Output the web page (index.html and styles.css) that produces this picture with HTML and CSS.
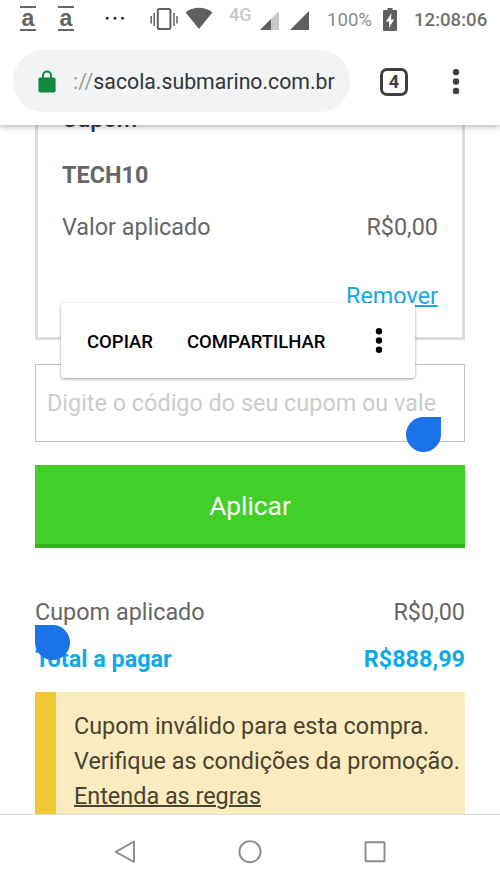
FILE: index.html
```html
<!DOCTYPE html>
<html lang="pt-BR">
<head>
<meta charset="utf-8">
<title>Sacola</title>
<link rel="stylesheet" href="styles.css">
</head>
<body>
<header class="status">
  <span class="amz">a</span>
  <span class="amz second">a</span>
  <svg class="dots" width="20" height="4" viewBox="0 0 20 4"><path fill="#222" d="M1 1h2.500v2.500H1zM8.700 1h2.500v2.500H8.700zM16.300 1h2.500v2.500h-2.500z"/></svg>
  <svg class="vibrate" width="28" height="24" viewBox="0 0 28 24"><rect x="7.800" y="2" width="12.600" height="20" rx="1.500" fill="none" stroke="#5f5f5f" stroke-width="2"/><path d="M4.200 6v13M1.200 9v7.500M24 6v13M27 9v7.500" stroke="#5f5f5f" stroke-width="1.500"/></svg>
  <svg class="wifi" width="28" height="22" viewBox="0 0 28 22"><path fill="#5f5f5f" d="M14 22 .7 5.500C4.500 2.300 9 .8 14 .8s9.500 1.500 13.300 4.700z"/></svg>
  <span class="net">4G</span>
  <svg class="sig1" width="19" height="19" viewBox="0 0 19 19"><path fill="#c8c8c8" d="M0 19 19 0v19z"/><path fill="#5f5f5f" d="M0 19 11 8v11z"/></svg>
  <svg class="sig2" width="19" height="19" viewBox="0 0 19 19"><path fill="#5f5f5f" d="M0 19 19 0v19z"/></svg>
  <span class="pct">100%</span>
  <svg class="battery" width="14" height="23" viewBox="0 0 14 23"><path fill="#5f5f5f" d="M4.500 0h5v2H13q1 0 1 1v19q0 1-1 1H1q-1 0-1-1V3q0-1 1-1h3.500z"/><path fill="#fff" d="M8.500 5 3 13.500h3V20l5-8.500H8z"/></svg>
  <span class="clock">12:08:06</span>
</header>
<div class="toolbar">
  <div class="address">
    <svg class="lock" width="18" height="23" viewBox="0 0 18 23"><path d="M5 9V5.500a4 4 0 0 1 8 0V9" fill="none" stroke="#118740" stroke-width="2"/><rect x=".4" y="7.500" width="17.200" height="15" rx="2" fill="#118740"/></svg>
    <span class="url"><span class="scheme">://</span>sacola.submarino.com.br</span>
  </div>
  <span class="tabs">4</span>
  <svg class="menu" width="8" height="26" viewBox="0 0 8 26"><g fill="#3c4043"><circle cx="4" cy="3.100" r="3.200"/><circle cx="4" cy="12.500" r="3.200"/><circle cx="4" cy="21.900" r="3.200"/></g></svg>
</div>
<main class="page">
  <section class="card">
    <h2 class="row title">Cupom</h2>
    <div class="row code">TECH10</div>
    <div class="row value"><span>Valor aplicado</span><span>R$0,00</span></div>
    <div class="row remove"><a class="link">Remover</a></div>
  </section>
  <div class="field">Digite o código do seu cupom ou vale</div>
  <div class="apply">Aplicar</div>
  <div class="row applied"><span>Cupom aplicado</span><span>R$0,00</span></div>
  <div class="row total"><span>Total a pagar</span><span>R$888,99</span></div>
  <div class="alert">
    <div>Cupom inválido para esta compra.</div>
    <div>Verifique as condições da promoção.</div>
    <div><a class="rules">Entenda as regras</a></div>
  </div>
  <div class="popup">
    <span class="copy">COPIAR</span><span class="share">COMPARTILHAR</span>
    <svg class="more" width="8" height="26" viewBox="0 0 8 26"><circle cx="4" cy="3.300" r="3.200"/><circle cx="4" cy="12.500" r="3.200"/><circle cx="4" cy="21.700" r="3.200"/></svg>
  </div>
  <i class="handle end"></i>
  <i class="handle start"></i>
</main>
<nav class="nav">
  <svg width="24" height="26" viewBox="0 0 24 26"><path d="M21 2.500v20.500L2.800 12.800z" fill="none" stroke="#8c8c8c" stroke-width="1.900" stroke-linejoin="round"/></svg>
  <svg width="24" height="26" viewBox="0 0 24 26"><circle cx="12" cy="12.700" r="10.600" fill="none" stroke="#8c8c8c" stroke-width="1.900"/></svg>
  <svg width="24" height="26" viewBox="0 0 24 26"><rect x="2.500" y="3.200" width="19" height="19" rx=".5" fill="none" stroke="#8c8c8c" stroke-width="1.900"/></svg>
</nav>
</body>
</html>
```
FILE: styles.css
```css
* { box-sizing: border-box; }
body { margin: 0; width: 500px; height: 889px; display: flex; flex-direction: column; overflow: hidden; background: #fff; font-family: Roboto, sans-serif; color: #666; }
svg { display: block; flex: none; }
span { white-space: nowrap; }
.status { height: 38px; flex: none; display: flex; align-items: flex-start; padding-left: 20px; background: #fff; position: relative; z-index: 3; }
.amz { width: 16px; height: 25px; margin-top: 6px; border: solid #666; border-width: 2px 0; font: bold 23px/20px "Liberation Sans", sans-serif; text-align: center; }
.second { margin-left: 22px; }
.dots { margin: 16px 0 0 31px; }
.vibrate { margin: 7px 0 0 25px; }
.wifi { margin: 7px 0 0 7px; }
.net { width: 24px; margin: 4px 0 0 16px; font-size: 18px; line-height: 21px; font-weight: 500; color: #c9c9c9; }
.sig1 { margin: 11px 0 0 7px; }
.sig2 { margin: 11px 0 0 11px; }
.pct { width: 45px; margin: 8px 0 0 18px; font-size: 18.600px; line-height: 24px; color: #8a8a8a; }
.battery { margin: 8px 0 0 11px; }
.clock { margin: 8px 0 0 17px; font-size: 18.600px; line-height: 24px; font-weight: 500; color: #707070; }
.toolbar { height: 87px; flex: none; display: flex; align-items: center; padding-left: 13px; background: #fff; box-shadow: 0 1px 7px rgba(0,0,0,.35); z-index: 2; position: relative; }
.address { width: 337px; height: 62px; margin-top: -1px; border-radius: 31px; background: #f1f3f4; display: flex; align-items: center; padding-left: 25px; }
.url { margin: 2px 0 0 17px; font-size: 21.250px; line-height: 28px; color: #333639; }
.scheme { color: #999c9e; }
.tabs { margin: 0 0 0 30px; width: 28px; height: 28px; border: 3px solid #3c4043; border-radius: 7px; font-size: 18px; line-height: 22px; font-weight: 700; color: #3c4043; text-align: center; }
.menu { margin-left: 44px; }
.page { height: 689px; flex: none; overflow: hidden; position: relative; padding: 0 35px; font-size: 23.400px; }
.row { display: flex; justify-content: space-between; height: 28px; line-height: 28px; }
.card { height: 245px; margin-top: -30px; border: 3px solid #ddd; padding: 7px 24px 0; }
.title { margin: 0; font-size: 23.400px; font-weight: 500; color: #333; }
.code { margin-top: 28px; font-weight: 700; }
.value { margin-top: 24px; }
.remove { margin-top: 41px; justify-content: flex-end; }
.link { color: #17a9e1; text-decoration: underline; text-decoration-thickness: 2px; }
.field { height: 78px; margin-top: 24px; border: 1px solid #c4c4c4; padding-left: 11px; line-height: 77px; color: #ccc; white-space: nowrap; }
.apply { height: 83px; margin-top: 23px; border-bottom: 4px solid #32b31d; background: #42cf2a; color: #fff; text-align: center; font-size: 26.300px; line-height: 83px; }
.applied { margin-top: 50px; }
.total { margin-top: 19px; font-weight: 700; color: #0eaae6; }
.alert { height: 130px; margin-top: 19px; border-left: 21px solid #f0c735; background: #faecc0; padding: 17px 0 0 18px; color: #49432f; line-height: 35px; white-space: nowrap; }
.rules { text-decoration: underline; text-decoration-thickness: 2px; }
.popup { position: absolute; left: 61px; top: 178px; width: 354px; height: 75px; border-radius: 3px; background: #fff; box-shadow: 0 1px 3px rgba(0,0,0,.4); display: flex; align-items: center; padding-left: 26px; font-size: 18.500px; font-weight: 500; color: #000; }
.copy, .share { margin-top: 2px; }
.share { margin-left: 34px; }
.more { margin-left: auto; margin-right: 32px; }
.handle { position: absolute; width: 35px; height: 35px; background: #1a73e8; border-radius: 50%; }
.end { left: 406px; top: 292px; border-top-right-radius: 0; }
.start { left: 35px; top: 500px; border-top-left-radius: 0; }
.nav { height: 75px; flex: none; border-top: 1px solid #ddd; background: #fff; display: flex; justify-content: center; align-items: center; gap: 101px; }
```
